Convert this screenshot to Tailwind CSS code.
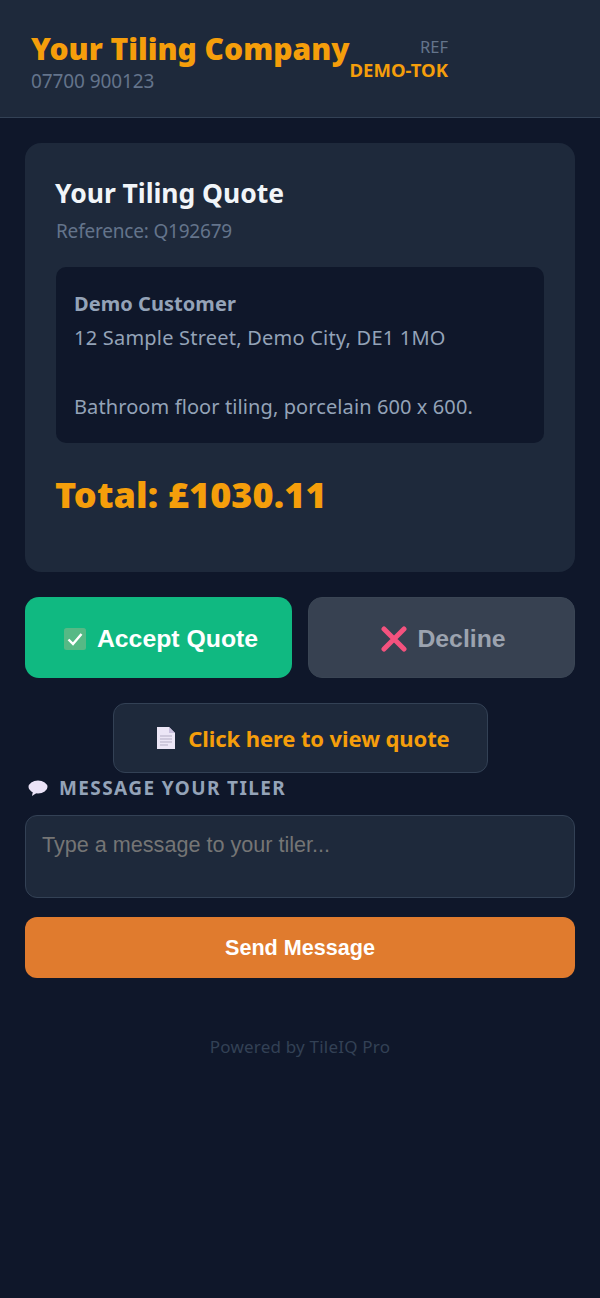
<!DOCTYPE html>
<html lang="en"><head><meta charset="utf-8"><title>Your Tiling Quote</title>
<script src="https://cdn.jsdelivr.net/npm/@tailwindcss/browser@4"></script></head>
<body class="m-0 bg-[#0f172a] font-['Noto_Sans',sans-serif]">
<div class="w-[600px] h-[1298px] overflow-hidden bg-[#0f172a]">
<header class="h-[118px] bg-[#1e293b] border-b border-[#334155] pl-[31px] pt-[30px] flex items-start">
  <div>
    <div class="text-[30px] leading-[38px] font-black text-[#f59e0b] tracking-[0px]">Your Tiling Company</div>
    <div class="text-[19px] leading-[26px] text-[#64748b] tracking-[-0.1px]">07700 900123</div>
  </div>
  <div class="text-right pt-[7px]">
    <div class="text-[16.5px] leading-[20px] text-[#64748b]">REF</div>
    <div class="text-[18.5px] leading-[26px] font-bold text-[#f59e0b] tracking-[0px]">DEMO-TOK</div>
  </div>
</header>
<main class="px-[25px] pt-[25px]">
  <section class="h-[429px] rounded-[16px] bg-[#1e293b] px-[31px] pt-[31px]">
    <h1 class="-ml-[1px] text-[26.5px] leading-[38px] font-bold text-[#f1f5f9] tracking-[-0.05px]">Your Tiling Quote</h1>
    <p class="mt-[7px] text-[19px] leading-[24px] text-[#64748b] tracking-[-0.2px]">Reference: Q192679</p>
    <div class="mt-[24px] h-[176px] rounded-[10px] bg-[#0f172a] px-[18px] pt-[20px] text-[#94a3b8] text-[20px] leading-[34px]">
      <div class="font-bold tracking-[0.05px]">Demo Customer</div>
      <div class="tracking-[0.22px]">12 Sample Street, Demo City, DE1 1MO</div>
      <div class="mt-[35px] tracking-[0.1px]">Bathroom floor tiling, porcelain 600 x 600.</div>
    </div>
    <div class="-ml-[1px] mt-[27px] text-[36px] leading-[50px] font-black text-[#f59e0b] tracking-[0.1px]">Total: £1030.11</div>
  </section>
  <div class="mt-[25px] grid grid-cols-2 gap-[16px] font-['Liberation_Sans',sans-serif] font-bold">
    <button class="h-[81px] rounded-[14px] bg-[#10b981] text-white text-[24.8px] flex items-center justify-center gap-[10px] pl-[4px] pt-[2px]">
      <svg width="24" height="24" viewBox="0 0 24 24" aria-hidden="true"><rect x="1" y="1" width="22" height="22" rx="2.5" fill="#56b985"/><path d="M5.5 12.5l4.5 4.5 8.5-10" fill="none" stroke="#fff" stroke-width="2.4"/></svg>
      Accept Quote</button>
    <button class="h-[81px] rounded-[14px] bg-[#374151] border border-[#3a4554] text-[#9ca3af] text-[24.8px] flex items-center justify-center gap-[10px] pl-[4px] pt-[2px]">
      <svg width="26" height="26" viewBox="0 0 26 26" aria-hidden="true"><path d="M3 3l20 20M23 3L3 23" fill="none" stroke="#f4527e" stroke-width="5" stroke-linecap="round"/></svg>
      Decline</button>
  </div>
  <div class="mt-[25px] flex justify-center">
    <a class="w-[375px] h-[70px] rounded-[12px] bg-[#1e293b] border border-[#334155] flex items-center justify-center gap-[11px] pl-[5px] text-[22px] font-bold text-[#f59e0b] tracking-[-0.1px]">
      <svg width="22" height="24" viewBox="0 0 22 24" aria-hidden="true"><path d="M2 1h12l6 6v16H2z" fill="#ece6f6"/><path d="M14 1l6 6h-6z" fill="#c9c0de"/><path d="M5 10h12M5 13h12M5 16h12M5 19h8" stroke="#b3adc4" stroke-width="1"/></svg>
      Click here to view quote</a>
  </div>
  <div class="mt-[3px] pl-[3px] flex items-center gap-[11px] h-[24px] text-[#94a3b8] text-[19px] font-bold tracking-[1.4px]">
    <svg width="20" height="18" viewBox="0 0 20 18" aria-hidden="true"><ellipse cx="10" cy="8" rx="9.5" ry="6.5" fill="#ebe3f7"/><path d="M5 12l-1 5 6-4z" fill="#ebe3f7"/></svg>
    MESSAGE YOUR TILER
  </div>
  <textarea class="mt-[15px] block w-[550px] h-[83px] rounded-[12px] bg-[#1e293b] border border-[#334155] px-[16px] py-[14px] font-['Liberation_Sans',sans-serif] text-[21.6px] leading-[30px] text-white placeholder:text-[#757575] resize-none" placeholder="Type a message to your tiler..."></textarea>
  <button class="mt-[19px] w-[550px] h-[61px] rounded-[12px] bg-[#e07b2e] pt-[2px] text-white font-['Liberation_Sans',sans-serif] text-[21.6px] font-bold">Send Message</button>
  <div class="mt-[57px] text-center text-[#334155] text-[17px] leading-[24px] tracking-[0.2px]">Powered by TileIQ Pro</div>
</main>
</div>
</body></html>
